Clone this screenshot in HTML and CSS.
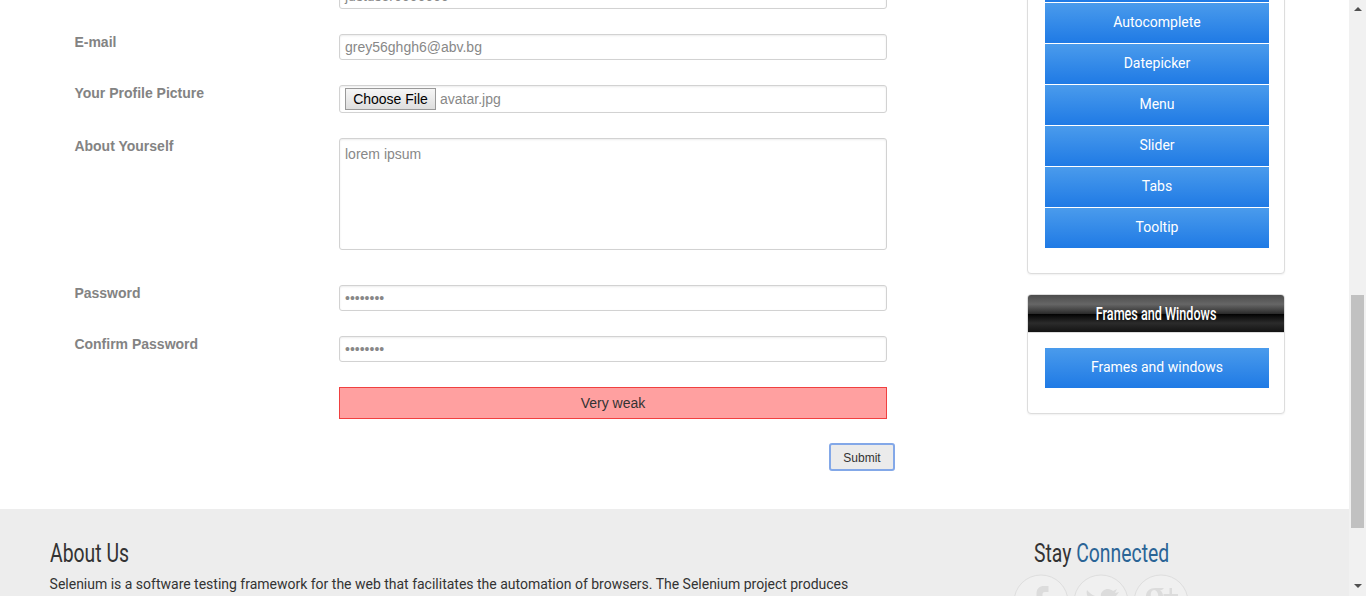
FILE: index.html
```html
<!DOCTYPE html>
<html lang="en">
<head>
<meta charset="utf-8">
<title>Registration</title>
<link rel="stylesheet" href="styles.css">
</head>
<body>
<div class="window">
  <div class="page">
    <div class="content">
      <form class="form">
        <div class="row row-first"><span></span><div class="field">justuser6666666</div></div>
        <div class="row"><label>E-mail</label><div class="field">grey56ghgh6@abv.bg</div></div>
        <div class="row"><label>Your Profile Picture</label><div class="field file"><span class="choose">Choose File</span><span>avatar.jpg</span></div></div>
        <div class="row row-about"><label>About Yourself</label><div class="field area">lorem ipsum</div></div>
        <div class="row"><label>Password</label><div class="field dots">••••••••</div></div>
        <div class="row"><label>Confirm Password</label><div class="field dots">••••••••</div></div>
        <div class="row"><span></span><div class="strength">Very weak</div></div>
        <button class="submit" type="button">Submit</button>
      </form>
      <aside class="sidebar">
        <section class="widget widget-list">
          <a class="link"></a>
          <a class="link">Autocomplete</a>
          <a class="link">Datepicker</a>
          <a class="link">Menu</a>
          <a class="link">Slider</a>
          <a class="link">Tabs</a>
          <a class="link">Tooltip</a>
        </section>
        <section class="widget widget-frames">
          <h3 class="widget-title"><span>Frames and Windows</span></h3>
          <div class="widget-body"><a class="link">Frames and windows</a></div>
        </section>
      </aside>
    </div>
    <footer class="footer">
      <div class="about">
        <h2><span class="narrow">About Us</span></h2>
        <p>Selenium is a software testing framework for the web that facilitates the automation of browsers. The Selenium project produces</p>
      </div>
      <div class="social">
        <h2><span class="narrow">Stay <b>Connected</b></span></h2>
        <div class="icons">
          <svg width="56" height="56" viewBox="0 0 56 56"><circle cx="28" cy="28" r="27"/><path d="M35.500 12v6h-3.500c-2 0-2.500 1-2.500 2.500V24h6l-.8 6h-5.200v15h-6V30h-4v-6h4v-4.500c0-5 3-7.500 7.500-7.500z"/></svg>
          <svg width="56" height="56" viewBox="0 0 56 56"><circle cx="28" cy="28" r="27"/><path d="M14 16c3 4 8 7 14 7-1-5 3-8 7-8 2 0 4 1 5 2l4-2-2 4 4-1-3 4c0 12-8 20-19 20-4 0-8-1-11-3 4 0 7-1 10-3-3 0-6-2-7-5h3c-3-1-5-4-5-7l3 1c-3-2-4-6-3-9z"/></svg>
          <svg width="56" height="56" viewBox="0 0 56 56"><circle cx="28" cy="28" r="27"/><path fill-rule="evenodd" d="M22 14h9l-2 2h-2c2 1.500 3 3.500 3 6 0 6-6 5-6 8 0 2 7 3 7 9 0 5-5 7-10 7s-9-2-9-6 4-6 9-6c-2-2-2-3-1-5-4 0-7-3-7-7 0-5 4-8 9-8zm-1 2c-5 0-4 11 1 11s4-11-1-11z"/><path d="M36.500 14h2.500v6h6v2.500h-6v6h-2.500v-6h-6v-2.500h6z"/></svg>
        </div>
      </div>
    </footer>
  </div>
  <div class="scrollbar">
    <i class="arrow arrow-up"></i>
    <div class="thumb"></div>
    <i class="arrow arrow-down"></i>
  </div>
</div>
</body>
</html>
```
FILE: styles.css
```css
* { box-sizing: border-box; }
body { margin: 0; background: #fff; font-family: Roboto, sans-serif; font-size: 14px; }
.window { display: flex; width: 1366px; height: 596px; overflow: hidden; }
.page { width: 1349px; height: 596px; overflow: hidden; }
.content { display: flex; height: 509px; }
.form { width: 895px; padding-left: 74px; font-family: "Liberation Sans", Arial, sans-serif; color: #888; }
.row { display: grid; grid-template-columns: 265px 548px; margin-bottom: 25px; }
.row-first { margin-top: -17px; }
.row-about { margin-bottom: 35px; }
.row label { height: 16px; padding-left: .4px; line-height: 16px; font-weight: bold; color: #838383; font-size: 14px; }
.field { height: 26px; border: 1px solid #d2d2d2; border-radius: 3px; padding: 0 5px; line-height: 25px; box-shadow: inset 0 1px 2px rgba(0,0,0,.08); font-size: 14px; }
.file { display: flex; align-items: center; gap: 4px; height: 28px; line-height: 26px; }
.choose { width: 91px; height: 22px; border: 1px solid #999; line-height: 20px; text-align: center; color: #000; background: linear-gradient(#f6f6f6, #dedede); font-size: 14px; }
.area { height: 112px; padding-top: 3px; }
.strength { height: 32px; border: 1px solid #f04040; background: #ffa0a0; color: #333; line-height: 30px; text-align: center; font-size: 14px; }
.submit { display: block; width: 66px; height: 28px; margin: -1px 0 0 auto; border: 2px solid #83a8e8; border-radius: 3px; background: #ebebeb; color: #333; font: 12px "Liberation Sans", Arial, sans-serif; padding: 1px 0 0; }
.sidebar { width: 258px; margin-left: 132px; }
.widget { border: 1px solid #ddd; border-radius: 4px; box-shadow: 0 1px 2px rgba(0,0,0,.06); background: #fff; }
.widget-list { height: 334px; margin-top: -60px; padding: 21px 15px 0 17px; }
.link { display: block; height: 40px; margin-bottom: 1px; background: linear-gradient(#4a9bec, #1f7ae5); color: #fff; line-height: 39px; text-align: center; font-size: 14px; letter-spacing: .01px; }
.widget-frames { height: 120px; margin-top: 20px; overflow: hidden; }
.widget-title { display: flex; justify-content: center; height: 38px; margin: 0; border-bottom: 1px solid #ddd; background: linear-gradient(#4c4c4c 0%, #666 25%, #474747 39%, #2c2c2c 50%, #000 51%, #111 60%, #2b2b2b 76%, #131313 100%); color: #fff; font-weight: 500; font-size: 18px; line-height: 37px; white-space: nowrap; }
.widget-title span { transform: scaleX(.7); }
.widget-body { padding: 15px 15px 0 17px; }
.footer { display: flex; height: 87px; padding: 28px 0 0 49.6px; background: #ededed; color: #333; }
.about { width: 964px; }
.footer h2 { height: 32px; margin: 0; font-size: 26px; font-weight: 400; line-height: 32px; }
.narrow { display: inline-block; transform: scaleX(.745); transform-origin: left; white-space: nowrap; }
.narrow b { color: #2a6496; font-weight: 400; }
.about p { margin: 6px 0 0; line-height: 18px; white-space: nowrap; letter-spacing: -.006px; }
.social h2 { padding-left: 20px; }
.icons { display: flex; gap: 4px; margin: 5px 0 0 -.6px; }
.icons circle { fill: #f0f0f0; stroke: #dedede; stroke-width: 1; }
.icons path { fill: #dcdcdc; }
.scrollbar { display: flex; flex-direction: column; align-items: center; width: 17px; height: 596px; padding: 7px 0 8px; background: #f1f1f1; }
.arrow { width: 0; height: 0; border: 4px solid transparent; }
.arrow-up { border-top: 0; border-bottom-color: #505050; }
.arrow-down { border-bottom: 0; border-top-color: #505050; margin-top: auto; }
.thumb { width: 13px; height: 233px; margin-top: 284px; background: #c1c1c1; }
```
